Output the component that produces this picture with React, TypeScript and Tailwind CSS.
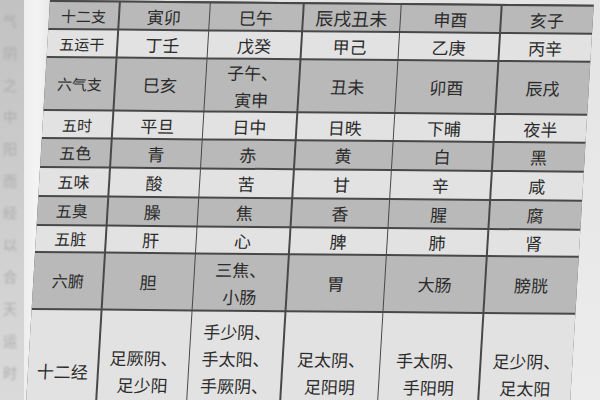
import React from "react";

type Cell = string | string[];
type Row = { gray: boolean; c1: string; cells: Cell[] };

const rows: Row[] = [
  { gray: true, c1: "text-[15px]", cells: ["十二支", "寅卯", "巳午", "辰戌丑未", "申酉", "亥子"] },
  { gray: false, c1: "text-[15px]", cells: ["五运干", "丁壬", "戊癸", "甲己", "乙庚", "丙辛"] },
  { gray: true, c1: "text-[15px]", cells: ["六气支", "巳亥", ["子午、", "寅申"], "丑未", "卯酉", "辰戌"] },
  { gray: false, c1: "text-[15px]", cells: ["五时", "平旦", "日中", "日昳", "下晡", "夜半"] },
  { gray: true, c1: "text-[16px]", cells: ["五色", "青", "赤", "黄", "白", "黑"] },
  { gray: false, c1: "text-[16px]", cells: ["五味", "酸", "苦", "甘", "辛", "咸"] },
  { gray: true, c1: "text-[16px]", cells: ["五臭", "臊", "焦", "香", "腥", "腐"] },
  { gray: false, c1: "text-[16px]", cells: ["五脏", "肝", "心", "脾", "肺", "肾"] },
  { gray: true, c1: "text-[16px]", cells: ["六腑", "胆", ["三焦、", "小肠"], "胃", "大肠", "膀胱"] },
  {
    gray: false,
    c1: "text-[17px]",
    cells: [
      "十二经",
      ["足厥阴、", "足少阳"],
      ["手少阴、", "手太阳、", "手厥阴、", "手少阳"],
      ["足太阴、", "足阳明"],
      ["手太阴、", "手阳明"],
      ["足少阴、", "足太阳"],
    ],
  },
];

const leftGlyphs = ["气", "阴", "之", "中", "阳", "而", "经", "以", "合", "天", "运", "时"];

export default function App() {
  return (
    <div className="w-[600px] h-[400px] overflow-hidden flex bg-[#e6e6e6] font-['Noto_Sans_CJK_SC',sans-serif]">
      <div className="w-[24px] h-full shrink-0 bg-gradient-to-b from-[#c2c2c2] via-[#cdcdcd] to-[#dadada] overflow-hidden">
        <div className="pl-[3px] pt-[4px] flex flex-col text-[14px] leading-[32px] text-[#acacac] blur-[1.2px]">
          {leftGlyphs.map((g, i) => (
            <span key={i}>{g}</span>
          ))}
        </div>
      </div>
      <div className="w-[26px] h-full shrink-0 bg-gradient-to-r from-[#eeeeee] via-[#f4f4f4] to-[#e8e8e8]" />
      <div className="flex-1 h-full bg-gradient-to-b from-[#e4e4e4] to-[#ececec]">
        <div className="w-[543.5px] origin-top-left skew-x-[-3.4deg] skew-y-[0.5deg] grid grid-cols-[69px_89px_92px_96px_99px_91px] grid-rows-[26px_26px_51px_26px_27px_27px_27px_25px_55px_120px] gap-x-[1.5px] gap-y-[2px] bg-[#484848] border-t-2 border-[#484848] text-[#2b2b2b]">
          {rows.map((row, ri) =>
            row.cells.map((cell, ci) => {
              const bg = row.gray ? "bg-[#b9b9b9]" : "bg-[#e2e2e2]";
              const size =
                ci === 0 ? row.c1 : cell === "辰戌丑未" ? "text-[18px]" : "text-[17px]";
              return (
                <div
                  key={`${ri}-${ci}`}
                  className={`${bg} ${size} flex flex-col items-center justify-center leading-[27px] whitespace-nowrap`}
                >
                  {Array.isArray(cell) ? (
                    cell.map((line, li) => <span key={li}>{line}</span>)
                  ) : (
                    <span>{cell}</span>
                  )}
                </div>
              );
            })
          )}
        </div>
      </div>
    </div>
  );
}
